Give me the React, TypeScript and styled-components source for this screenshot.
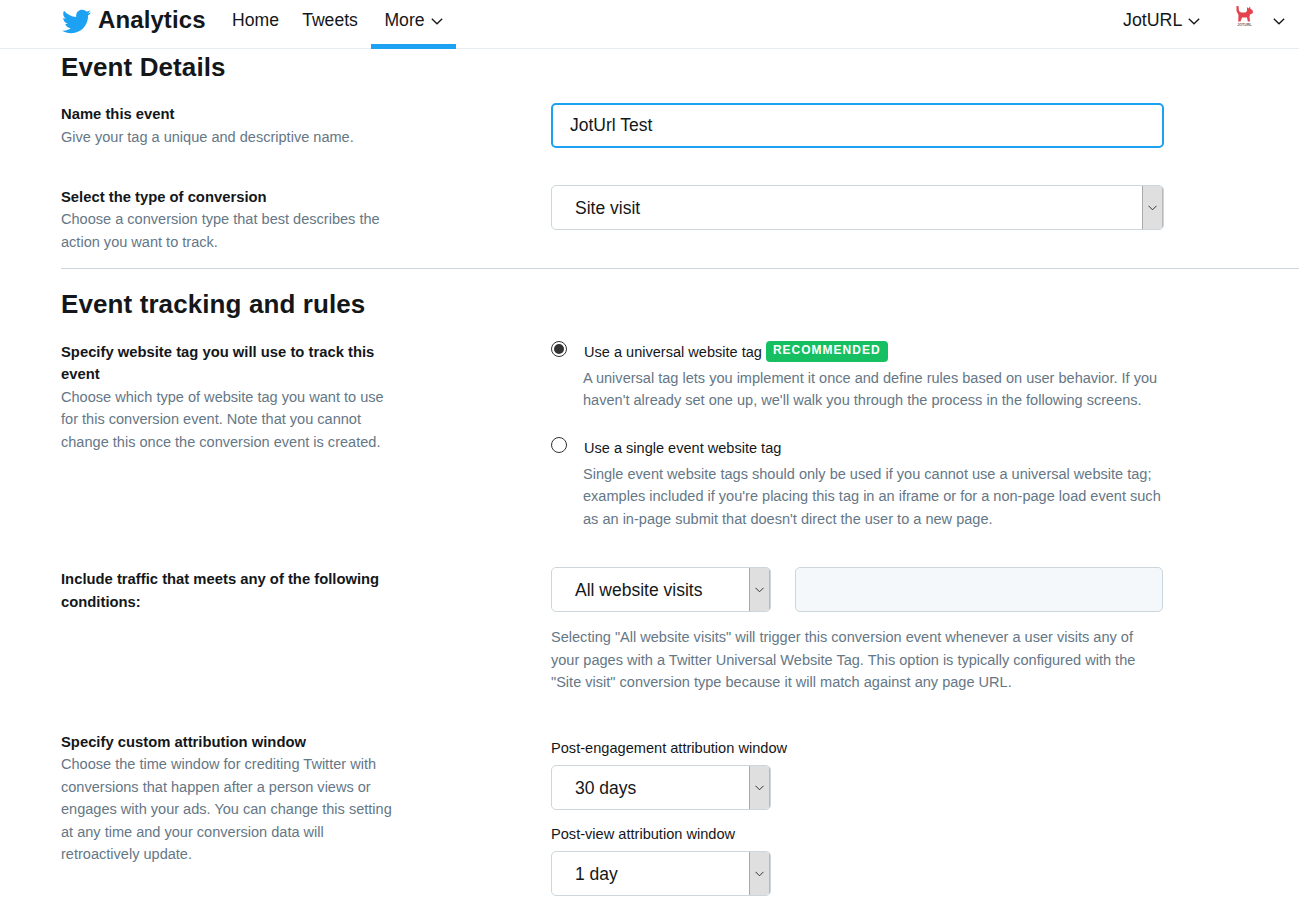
import styled, { createGlobalStyle } from 'styled-components';
import { FaTwitter } from 'react-icons/fa';

const GlobalStyle = createGlobalStyle`
  html, body {
    margin: 0;
    padding: 0;
    background: #fff;
    font-family: "Liberation Sans", Arial, sans-serif;
    color: #14171a;
    overflow: hidden;
  }
`;

const Header = styled.header`
  display: flex;
  align-items: stretch;
  justify-content: space-between;
  height: 48px;
  padding: 0 0 0 62px;
  border-bottom: 1px solid #e6ecf0;
`;

const HeaderGroup = styled.div`
  display: flex;
  align-items: stretch;
`;

const Brand = styled.div`
  display: flex;
  align-items: center;
  width: 160px;
  padding-bottom: 6px;
  box-sizing: border-box;
  color: #1da1f2;
`;

const BrandName = styled.span`
  margin: 0 0 3px 7px;
  font-size: 24px;
  font-weight: 700;
  letter-spacing: 0.1px;
  color: #14171a;
`;

const NavItem = styled.div<{ $active?: boolean; $width: number }>`
  display: flex;
  align-items: center;
  justify-content: center;
  gap: 6px;
  box-sizing: border-box;
  width: ${(p) => p.$width}px;
  height: 49px;
  padding-bottom: ${(p) => (p.$active ? 4 : 9)}px;
  font-size: 17.6px;
  color: #14171a;
  border-bottom: ${(p) => (p.$active ? '5px solid #1da1f2' : '0')};
`;

const Chevron = styled.svg`
  width: 12px;
  height: 7px;
  margin-top: 3px;
  fill: none;
  stroke: #14171a;
  stroke-width: 1.3;
`;

const AccountItem = styled.div`
  display: flex;
  align-items: center;
  gap: 6px;
  width: 112px;
  padding-bottom: 8px;
  font-size: 17.8px;
`;

const AvatarItem = styled.div`
  display: flex;
  align-items: flex-start;
  width: 64px;
  padding-top: 6px;
  box-sizing: border-box;
  ${Chevron} {
    margin: 12px 0 0 18px;
  }
`;

const Main = styled.main`
  padding-left: 61px;
`;

const SectionTitle = styled.h2<{ $top: number }>`
  margin: ${(p) => p.$top}px 0 0;
  font-size: 26px;
  line-height: 32px;
  font-weight: 700;
  letter-spacing: 0.1px;
  color: #14171a;
`;

const Row = styled.section<{ $top: number }>`
  display: grid;
  grid-template-columns: 490px 613px;
  margin-top: ${(p) => p.$top}px;
`;

const RowLabel = styled.div<{ $shift?: number }>`
  width: 335px;
  margin-top: ${(p) => p.$shift ?? 0}px;
`;

const LabelTitle = styled.div`
  font-size: 14.8px;
  line-height: 22.5px;
  font-weight: 700;
  color: #14171a;
`;

const LabelText = styled.div`
  font-size: 14.55px;
  line-height: 22.5px;
  color: #657786;
`;

const TextInput = styled.input`
  display: block;
  box-sizing: border-box;
  width: 613px;
  height: 45px;
  padding: 0 17px;
  border: 2px solid #1da1f2;
  border-radius: 5px;
  outline: none;
  font-family: inherit;
  font-size: 17.5px;
  color: #14171a;
`;

const SelectBox = styled.div<{ $width: number }>`
  display: flex;
  align-items: stretch;
  justify-content: space-between;
  box-sizing: border-box;
  flex: none;
  width: ${(p) => p.$width}px;
  height: 45px;
  border: 1px solid #ccd6dd;
  border-radius: 5px;
  background: #fff;
  overflow: hidden;
`;

const SelectValue = styled.span`
  align-self: center;
  padding: 1px 0 0 23px;
  font-size: 17.5px;
  color: #14171a;
`;

const SelectArrow = styled.span`
  display: flex;
  align-items: center;
  justify-content: center;
  box-sizing: border-box;
  width: 21px;
  background: #dfdfdf;
  border-left: 1px solid #a9a9a9;
  border-right: 1px solid #b8b8b8;
  svg {
    width: 9px;
    height: 6px;
    fill: none;
    stroke: #333;
    stroke-width: 1;
  }
`;

const Divider = styled.hr`
  height: 1px;
  margin: 15px 0 0;
  border: 0;
  background: #ccd6dd;
`;

const RadioOption = styled.div<{ $top?: number }>`
  display: grid;
  grid-template-columns: 33px 1fr;
  margin-top: ${(p) => p.$top ?? 0}px;
`;

const RadioCircle = styled.span<{ $checked?: boolean }>`
  position: relative;
  display: block;
  box-sizing: border-box;
  width: 16px;
  height: 16px;
  border: 1px solid #333;
  border-radius: 50%;
  background: #fff;
  &::after {
    content: '';
    display: ${(p) => (p.$checked ? 'block' : 'none')};
    position: absolute;
    inset: 2px;
    border-radius: 50%;
    background: #333;
  }
`;

const RadioTitle = styled.div`
  display: flex;
  align-items: center;
  gap: 4px;
  height: 22px;
  font-size: 14.55px;
  color: #14171a;
`;

const Badge = styled.span`
  display: inline-block;
  height: 21px;
  margin-top: -1px;
  padding: 0 7px;
  border-radius: 4px;
  background: #17bf63;
  color: #fff;
  font-size: 12px;
  line-height: 18px;
  font-weight: 700;
  letter-spacing: 1px;
`;

const RadioText = styled.div`
  margin: 3.6px 0 0 -1px;
  font-size: 14.55px;
  line-height: 22.5px;
  color: #657786;
  width: 590px;
`;

const FieldPair = styled.div`
  display: flex;
  gap: 24px;
`;

const DisabledField = styled.div`
  box-sizing: border-box;
  width: 368px;
  height: 45px;
  border: 1px solid #ccd6dd;
  border-radius: 5px;
  background: #f5f8fa;
`;

const HelpText = styled.div`
  margin-top: 14px;
  font-size: 14.55px;
  line-height: 22.5px;
  color: #657786;
  width: 600px;
`;

const FieldCaption = styled.div<{ $top: number }>`
  margin: ${(p) => p.$top}px 0 8px;
  font-size: 14.6px;
  line-height: 18px;
  color: #14171a;
`;

const ChevronDown = () => (
  <Chevron viewBox="0 0 12 7">
    <path d="M0.8 0.8 L6 5.8 L11.2 0.8" />
  </Chevron>
);

const Select = ({ value, width }: { value: string; width: number }) => (
  <SelectBox $width={width}>
    <SelectValue>{value}</SelectValue>
    <SelectArrow>
      <svg viewBox="0 0 9 6">
        <path d="M0.5 0.8 L4.5 4.8 L8.5 0.8" />
      </svg>
    </SelectArrow>
  </SelectBox>
);

const DogLogo = () => (
  <svg width="20" height="21" viewBox="0 0 20 21">
    <path
      fill="#e5424d"
      d="M1.5 0 L3.5 0 L4 5 L6 6.5 L10.5 6.5 L12 5 L12 1 L13.5 2.5 L15 0.5 L15.5 3 L17.5 4 L18 7 L15 8.5 L14.5 11 L15 15.5 L12.8 15.5 L12 11.5 L7 11.5 L5.5 15.5 L3.2 15.5 L3.5 9 L1.5 5 Z"
    />
    <text x="9.5" y="20" fontSize="3.6" fontWeight="700" textAnchor="middle" fill="#6f5a60">
      JOTURL
    </text>
  </svg>
);

export default function App() {
  return (
    <>
      <GlobalStyle />
      <Header>
        <HeaderGroup>
          <Brand>
            <FaTwitter size={29} />
            <BrandName>Analytics</BrandName>
          </Brand>
          <NavItem $width={67}>Home</NavItem>
          <NavItem $width={82}>Tweets</NavItem>
          <NavItem $width={85} $active>
            More <ChevronDown />
          </NavItem>
        </HeaderGroup>
        <HeaderGroup>
          <AccountItem>
            JotURL <ChevronDown />
          </AccountItem>
          <AvatarItem>
            <DogLogo />
            <ChevronDown />
          </AvatarItem>
        </HeaderGroup>
      </Header>
      <Main>
        <SectionTitle $top={2}>Event Details</SectionTitle>
        <Row $top={20}>
          <RowLabel>
            <LabelTitle>Name this event</LabelTitle>
            <LabelText>Give your tag a unique and descriptive name.</LabelText>
          </RowLabel>
          <TextInput defaultValue="JotUrl Test" />
        </Row>
        <Row $top={37}>
          <RowLabel $shift={0.5}>
            <LabelTitle>Select the type of conversion</LabelTitle>
            <LabelText>Choose a conversion type that best describes the action you want to track.</LabelText>
          </RowLabel>
          <Select value="Site visit" width={613} />
        </Row>
        <Divider />
        <SectionTitle $top={19}>Event tracking and rules</SectionTitle>
        <Row $top={21}>
          <RowLabel $shift={-0.5}>
            <LabelTitle>Specify website tag you will use to track this event</LabelTitle>
            <LabelText>
              Choose which type of website tag you want to use for this conversion event. Note that you cannot
              change this once the conversion event is created.
            </LabelText>
          </RowLabel>
          <div>
            <RadioOption>
              <RadioCircle $checked />
              <div>
                <RadioTitle>
                  Use a universal website tag <Badge>RECOMMENDED</Badge>
                </RadioTitle>
                <RadioText>
                  A universal tag lets you implement it once and define rules based on user behavior. If you
                  haven't already set one up, we'll walk you through the process in the following screens.
                </RadioText>
              </div>
            </RadioOption>
            <RadioOption $top={25.4}>
              <RadioCircle />
              <div>
                <RadioTitle>Use a single event website tag</RadioTitle>
                <RadioText>
                  Single event website tags should only be used if you cannot use a universal website tag;
                  examples included if you're placing this tag in an iframe or for a non-page load event such
                  as an in-page submit that doesn't direct the user to a new page.
                </RadioText>
              </div>
            </RadioOption>
          </div>
        </Row>
        <Row $top={37}>
          <RowLabel $shift={1}>
            <LabelTitle>Include traffic that meets any of the following conditions:</LabelTitle>
          </RowLabel>
          <div>
            <FieldPair>
              <Select value="All website visits" width={220} />
              <DisabledField />
            </FieldPair>
            <HelpText>
              Selecting "All website visits" will trigger this conversion event whenever a user visits any of
              your pages with a Twitter Universal Website Tag. This option is typically configured with the
              "Site visit" conversion type because it will match against any page URL.
            </HelpText>
          </div>
        </Row>
        <Row $top={37}>
          <RowLabel>
            <LabelTitle>Specify custom attribution window</LabelTitle>
            <LabelText>
              Choose the time window for crediting Twitter with conversions that happen after a person views or
              engages with your ads. You can change this setting at any time and your conversion data will
              retroactively update.
            </LabelText>
          </RowLabel>
          <div>
            <FieldCaption $top={8.5}>Post-engagement attribution window</FieldCaption>
            <Select value="30 days" width={220} />
            <FieldCaption $top={15}>Post-view attribution window</FieldCaption>
            <Select value="1 day" width={220} />
          </div>
        </Row>
      </Main>
    </>
  );
}
